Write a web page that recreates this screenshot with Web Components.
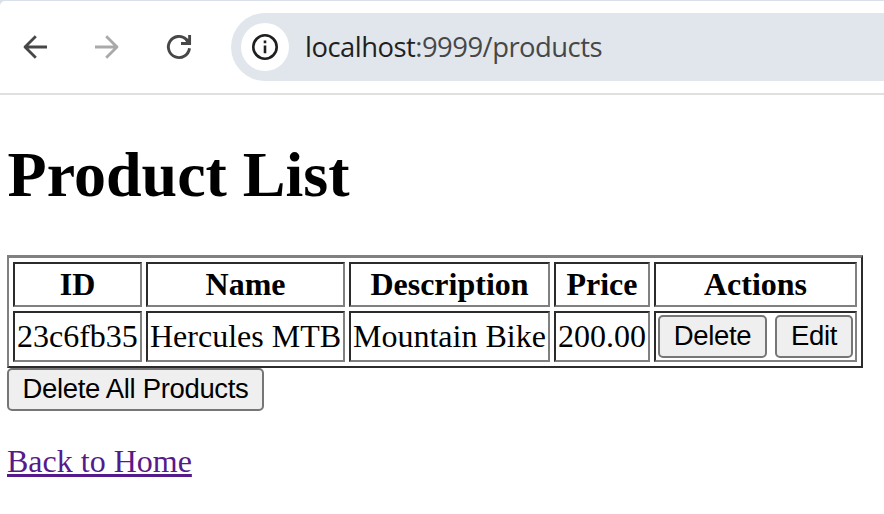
<!DOCTYPE html>
<html lang="en">
<head>
<meta charset="utf-8">
<title>Product List</title>
<style>
html,body{margin:0;height:100%;background:#fff;overflow:hidden}
</style>
</head>
<body>
<product-app></product-app>
<script>
const define = (name, html) => customElements.define(name, class extends HTMLElement {
  constructor() {
    super();
    const t = document.createElement('template');
    t.innerHTML = html;
    this.attachShadow({ mode: 'open' }).append(t.content.cloneNode(true));
  }
});

define('browser-bar', `
<style>
:host{display:block;background:#d9e0ea;padding-top:1px}
.bar{display:flex;align-items:center;box-sizing:border-box;height:94px;padding:0 0 0 17px;background:#fff;border-bottom:2px solid #e0e0e0;border-top-left-radius:5px}
svg{display:block;flex:none}
.nav{display:flex;gap:36px;width:214px}
.address{flex:1;height:68px;box-sizing:border-box;display:flex;align-items:center;background:#e1e6ed;border-radius:34px 0 0 34px;padding-left:10px}
.info{width:48px;height:48px;border-radius:50%;background:#fff;flex:none}
.url{margin-left:16px;font:27.4px/40px "Open Sans","Noto Sans",sans-serif;letter-spacing:-.5px;color:#474747;white-space:nowrap}
.host{color:#1f1f1f}
</style>
<div class="bar">
<div class="nav">
<svg width="36" height="36" viewBox="0 0 36 36" fill="none" stroke="#474747" stroke-width="2.8"><path d="M30 18H8M18.8 7.2 8 18 18.8 28.8" stroke-linejoin="round"/></svg>
<svg width="36" height="36" viewBox="0 0 36 36" fill="none" stroke="#a9a9a9" stroke-width="2.8"><path d="M6 18H28M17.2 7.2 28 18 17.2 28.8" stroke-linejoin="round"/></svg>
<svg width="36" height="36" viewBox="0 0 36 36" fill="none" stroke="#474747" stroke-width="2.9"><path d="M28.5 19.3A10.6 10.6 0 1 1 25.5 10.5L28 13.8M28.6 6V14.5H20"/><path d="M24 11.6 26.3 9.4 29 12V14.5H26.5Z" fill="#474747" stroke="none"/></svg>
</div>
<div class="address">
<svg class="info" viewBox="0 0 48 48"><circle cx="24" cy="24" r="11.7" fill="none" stroke="#1f1f1f" stroke-width="2.6"/><path d="M22.7 22.4h2.6v7.8h-2.6zM22.7 17.6h2.6v2.6h-2.6z" fill="#1f1f1f"/></svg>
<div class="url"><span class="host">localhost</span>:9999/products</div>
</div>
</div>`);

define('push-button', `
<style>
:host{display:inline-flex;box-sizing:border-box;height:43px;border:2px solid #767676;border-radius:5px;background:#efefef;color:#000;align-items:center;justify-content:center;font:27.5px/31px "Liberation Sans",Arial,sans-serif;letter-spacing:-.33px;white-space:nowrap;padding-bottom:2px}
</style><slot></slot>`);

define('grid-cell', `
<style>
:host{display:flex;box-sizing:border-box;align-items:center;border:2px solid;border-color:#2b2b2b #808080 #808080 #2b2b2b;padding:0 2px 1px;white-space:nowrap;gap:8px}
:host([head]){font-weight:bold;justify-content:center}
</style><slot></slot>`);

define('product-table', `
<style>
:host{display:grid;box-sizing:border-box;width:856px;height:113px;border:2px solid;border-top-width:3px;border-color:#808080 #2b2b2b #2b2b2b #808080;padding:4px;gap:4px;grid-template-columns:129px 199px 201px 96px 203px;grid-template-rows:45px 51px}
</style><slot></slot>`);

define('product-app', `
<style>
:host{display:block;font:32px/36px "Liberation Serif","Times New Roman",serif;color:#000}
main{padding:0 7px}
h1{margin:43px 0 43px;padding-left:.6px;font-size:64px;line-height:74px;font-weight:bold}
push-button.all{display:flex;width:257px}
grid-cell.actions{padding-bottom:0}
.del{width:109px}.edit{width:78px}
p{margin:32px 0 0}
a{color:#551a8b;text-decoration:underline;text-decoration-thickness:3px;text-underline-offset:2px;text-decoration-skip-ink:none}
</style>
<browser-bar></browser-bar>
<main>
<h1>Product List</h1>
<product-table>
<grid-cell head>ID</grid-cell><grid-cell head>Name</grid-cell><grid-cell head>Description</grid-cell><grid-cell head>Price</grid-cell><grid-cell head>Actions</grid-cell>
<grid-cell>23c6fb35</grid-cell><grid-cell>Hercules MTB</grid-cell><grid-cell>Mountain Bike</grid-cell><grid-cell>200.00</grid-cell><grid-cell class="actions"><push-button class="del">Delete</push-button><push-button class="edit">Edit</push-button></grid-cell>
</product-table>
<push-button class="all">Delete All Products</push-button>
<p><a href="#">Back to Home</a></p>
</main>`);
</script>
</body>
</html>
